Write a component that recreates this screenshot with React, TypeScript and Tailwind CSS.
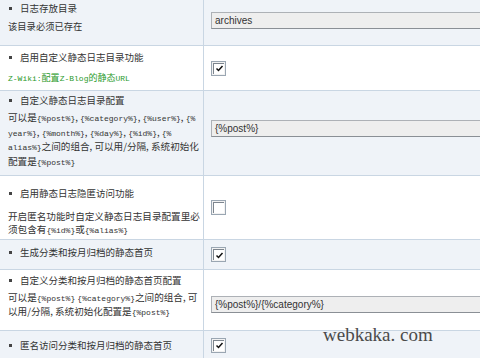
import React from 'react';

const cjk = '"Noto Sans CJK SC", "Liberation Sans", sans-serif';
const mono = '"Liberation Mono", "Noto Sans CJK SC", monospace';

// 小号等宽片段, 如 {%post%}
const M: React.FC<{ children: React.ReactNode }> = ({ children }) => (
    <span className="text-[8px]" style={{ fontFamily: mono }}>{children}</span>
);

const Title: React.FC<{ text: string }> = ({ text }) => (
    <div className="flex items-center h-[14px] leading-[14px] text-[9.5px] text-[#333]">
        <span className="w-[3px] h-[3px] bg-[#444] ml-[1px] mr-[8px]" />
        <span>{text}</span>
    </div>
);

const CheckBox: React.FC<{ checked?: boolean }> = ({ checked }) => (
    <div className="w-[15px] h-[15px] border border-[#9aa6b2] bg-[#f2f2f2] flex items-center justify-center">
        <div className="w-[11px] h-[11px] border-t border-l border-[#7d858e] bg-white flex items-center justify-center">
            {checked && (
                <svg width="9" height="9" viewBox="0 0 9 9">
                    <path d="M1.5 4.5 L3.5 6.5 L7.5 2" stroke="#111" strokeWidth="1.5" fill="none" />
                </svg>
            )}
        </div>
    </div>
);

const TextBox: React.FC<{ value: string }> = ({ value }) => (
    <div
        className="w-[290px] h-[17px] border border-[#adb1b6] border-b-[#8a8f95] bg-[#eeeeee] pl-[3px] text-[10px] leading-[15px] text-[#333]"
        style={{ fontFamily: '"Liberation Sans", Arial, sans-serif' }}
    >
        {value}
    </div>
);

const Row: React.FC<{
    h: string;
    bg: string;
    left: React.ReactNode;
    right: React.ReactNode;
}> = ({ h, bg, left, right }) => (
    <div className={`flex border-b border-[#c9d6e3] ${h} ${bg}`}>
        <div className="w-[204px] shrink-0 pl-[8px] border-r border-[#c9d6e3]">{left}</div>
        <div className="flex-1 pl-[7px] flex items-center overflow-hidden">{right}</div>
    </div>
);

export default function App() {
    const blue = 'bg-[#eff3f8]';
    const white = 'bg-white';

    return (
        <div className="relative w-[480px] h-[358px] overflow-hidden bg-[#eff3f8]" style={{ fontFamily: cjk }}>
            {/* 日志存放目录 */}
            <Row
                h="h-[46px]"
                bg={blue}
                left={
                    <div className="pt-[1px]">
                        <Title text="日志存放目录" />
                        <div className="mt-[4px] text-[9.3px] leading-[14px] text-[#333]">该目录必须已存在</div>
                    </div>
                }
                right={<div className="-mt-[5px]"><TextBox value="archives" /></div>}
            />

            {/* 启用自定义静态日志目录功能 */}
            <Row
                h="h-[45px]"
                bg={white}
                left={
                    <div className="pt-[4px]">
                        <Title text="启用自定义静态日志目录功能" />
                        <div className="mt-[7px] text-[9px] leading-[14px] text-[#2a9a2a]">
                            <M>Z-Wiki:</M>配置<M>Z-Blog</M>的静态<M>URL</M>
                        </div>
                    </div>
                }
                right={<CheckBox checked />}
            />

            {/* 自定义静态日志目录配置 */}
            <Row
                h="h-[85px]"
                bg={blue}
                left={
                    <div className="pt-[2px]">
                        <Title text="自定义静态日志目录配置" />
                        <div className="mt-[4px] text-[9.6px] leading-[13.5px] text-[#333] whitespace-nowrap">
                            <div>可以是<M>{'{%post%}'}</M>, <M>{'{%category%}'}</M>, <M>{'{%user%}'}</M>, <M>{'{%'}</M></div>
                            <div><M>{'year%}'}</M>, <M>{'{%month%}'}</M>, <M>{'{%day%}'}</M>, <M>{'{%id%}'}</M>, <M>{'{%'}</M></div>
                            <div><M>{'alias%}'}</M>之间的组合, 可以用/分隔, 系统初始化</div>
                            <div>配置是<M>{'{%post%}'}</M></div>
                        </div>
                    </div>
                }
                right={<div className="-mt-[10px]"><TextBox value="{%post%}" /></div>}
            />

            {/* 启用静态日志隐匿访问功能 */}
            <Row
                h="h-[64px]"
                bg={white}
                left={
                    <div className="pt-[10px]">
                        <Title text="启用静态日志隐匿访问功能" />
                        <div className="mt-[10px] text-[9.6px] leading-[13px] text-[#333] whitespace-nowrap">
                            <div>开启匿名功能时自定义静态日志目录配置里必</div>
                            <div>须包含有<M>{'{%id%}'}</M>或<M>{'{%alias%}'}</M></div>
                        </div>
                    </div>
                }
                right={<CheckBox />}
            />

            {/* 生成分类和按月归档的静态首页 */}
            <Row
                h="h-[30px]"
                bg={blue}
                left={
                    <div className="pt-[5px]">
                        <Title text="生成分类和按月归档的静态首页" />
                    </div>
                }
                right={<CheckBox checked />}
            />

            {/* 自定义分类和按月归档的静态首页配置 */}
            <Row
                h="h-[61px]"
                bg={white}
                left={
                    <div className="pt-[3px]">
                        <Title text="自定义分类和按月归档的静态首页配置" />
                        <div className="mt-[4px] text-[9.6px] leading-[13px] text-[#333] whitespace-nowrap">
                            <div>可以是<M>{'{%post%}'}</M> <M>{'{%category%}'}</M>之间的组合, 可</div>
                            <div>以用/分隔, 系统初始化配置是<M>{'{%post%}'}</M></div>
                        </div>
                    </div>
                }
                right={<div className="mt-[8px]"><TextBox value="{%post%}/{%category%}" /></div>}
            />

            {/* 匿名访问分类和按月归档的静态首页 */}
            <Row
                h="h-[40px]"
                bg={blue}
                left={
                    <div className="pt-[7px]">
                        <Title text="匿名访问分类和按月归档的静态首页" />
                    </div>
                }
                right={<div className="-mt-[11px]"><CheckBox checked /></div>}
            />

            {/* 水印 */}
            <div
                className="absolute left-[323px] top-[324px] text-[19px] leading-[22px] text-[#4a4a4a]"
                style={{ fontFamily: '"Liberation Serif", serif' }}
            >
                webkaka. com
            </div>
        </div>
    );
}
